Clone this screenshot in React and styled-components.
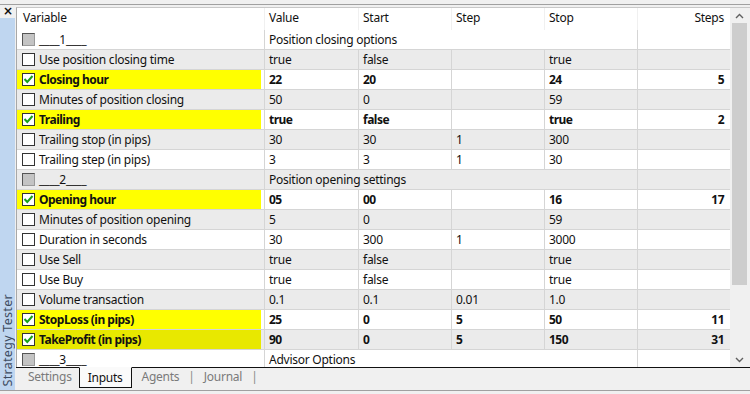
import React from "react";
import styled, { createGlobalStyle } from "styled-components";

const GlobalStyle = createGlobalStyle`
  html, body {
    margin: 0;
    padding: 0;
    background: #f0f0f0;
  }
  body {
    font-family: "Noto Sans", "Open Sans", sans-serif;
    font-size: 12px;
    letter-spacing: -0.25px;
    color: #111;
  }
`;

const rows = [
  { group: true, name: "____1____", desc: "Position closing options" },
  { name: "Use position closing time", value: "true", start: "false", step: "", stop: "true", steps: "" },
  { name: "Closing hour", checked: true, value: "22", start: "20", step: "", stop: "24", steps: "5" },
  { name: "Minutes of position closing", value: "50", start: "0", step: "", stop: "59", steps: "" },
  { name: "Trailing", checked: true, value: "true", start: "false", step: "", stop: "true", steps: "2" },
  { name: "Trailing stop (in pips)", value: "30", start: "30", step: "1", stop: "300", steps: "" },
  { name: "Trailing step (in pips)", value: "3", start: "3", step: "1", stop: "30", steps: "" },
  { group: true, name: "____2____", desc: "Position opening settings" },
  { name: "Opening hour", checked: true, value: "05", start: "00", step: "", stop: "16", steps: "17" },
  { name: "Minutes of position opening", value: "5", start: "0", step: "", stop: "59", steps: "" },
  { name: "Duration in seconds", value: "30", start: "300", step: "1", stop: "3000", steps: "" },
  { name: "Use Sell", value: "true", start: "false", step: "", stop: "true", steps: "" },
  { name: "Use Buy", value: "true", start: "false", step: "", stop: "true", steps: "" },
  { name: "Volume transaction", value: "0.1", start: "0.1", step: "0.01", stop: "1.0", steps: "" },
  { name: "StopLoss (in pips)", checked: true, value: "25", start: "0", step: "5", stop: "50", steps: "11" },
  { name: "TakeProfit (in pips)", checked: true, value: "90", start: "0", step: "5", stop: "150", steps: "31" },
  { group: true, name: "____3____", desc: "Advisor Options" },
];

const COLS = "247px 94px 93px 93px 93px 93px";

const Window = styled.div`
  width: 750px;
  height: 394px;
  box-sizing: border-box;
  padding-top: 4px;
  background: #f0f0f0;
  overflow: hidden;
  display: flex;
  flex-direction: column;
`;

const Frame = styled.div`
  flex: 1;
  border-top: 1px solid #a0a0a0;
  border-bottom: 1px solid #a0a0a0;
  display: flex;
  min-height: 0;
  margin-bottom: 3px;
`;

const Sidebar = styled.div`
  width: 15px;
  display: flex;
  flex-direction: column;
  margin-right: 1px;
`;

const Close = styled.div`
  height: 13px;
  font-family: "DejaVu Sans", sans-serif;
  font-weight: bold;
  font-size: 12px;
  line-height: 12px;
  padding-left: 3px;
  color: #111;
`;

const SideStrip = styled.div`
  flex: 1;
  background: #bfd6f0;
  display: flex;
  align-items: flex-end;
  justify-content: center;
  overflow: hidden;
`;

const SideLabel = styled.div`
  writing-mode: vertical-rl;
  transform: rotate(180deg);
  color: #3d4b60;
  font-size: 12.5px;
  letter-spacing: 0.3px;
  line-height: 15px;
  padding-top: 3px;
  white-space: nowrap;
`;

const Main = styled.div`
  flex: 1;
  display: flex;
  flex-direction: column;
  min-width: 0;
  padding-top: 2px;
`;

const GridArea = styled.div`
  height: 360px;
  display: flex;
  border-left: 1px solid #a8a8a8;
  border-top: 1px solid #c8c8c8;
  box-sizing: border-box;
  overflow: hidden;
`;

const Table = styled.div`
  width: 713px;
  background: #fff;
  overflow: hidden;
`;

const HeaderRow = styled.div`
  display: grid;
  grid-template-columns: ${COLS};
  height: 22px;
  background: #fff;
`;

const HeadCell = styled.div`
  padding: 0 ${(p) => (p.$right ? "6px" : "5px")};
  line-height: 20px;
  text-align: ${(p) => (p.$right ? "right" : "left")};
  border-left: ${(p) => (p.$first ? "none" : "1px solid #f0f0f0")};
  padding-left: ${(p) => (p.$first ? "6px" : "4px")};
`;

const Row = styled.div`
  display: grid;
  grid-template-columns: ${COLS};
  height: 20px;
  box-sizing: border-box;
  border-bottom: 1px solid #d5d5d5;
  background: ${(p) => (p.$alt ? "#ebebeb" : "#fff")};
  font-weight: ${(p) => (p.$bold ? "bold" : "normal")};
  letter-spacing: ${(p) => (p.$bold ? "-0.5px" : "-0.25px")};
`;

const NameCell = styled.div`
  display: flex;
  align-items: center;
  gap: 4px;
  padding-left: 5px;
  margin-right: 3px;
  white-space: nowrap;
  overflow: hidden;
  background: ${(p) => (p.$hl ? (p.$alt ? "#e8e800" : "#ffff00") : "transparent")};
`;

const Cell = styled.div`
  padding: 0 ${(p) => (p.$right ? "6px" : "4px")};
  line-height: 19px;
  text-align: ${(p) => (p.$right ? "right" : "left")};
  border-left: 1px solid #d5d5d5;
  white-space: nowrap;
  overflow: hidden;
`;

const DescCell = styled(Cell)`
  grid-column: span 4;
`;

const Box = styled.span`
  width: 13px;
  height: 13px;
  box-sizing: border-box;
  flex-shrink: 0;
  display: flex;
  align-items: center;
  justify-content: center;
  background: ${(p) => (p.$group ? "#c4c4c4" : "#fff")};
  border: 1px solid ${(p) => (p.$group ? "#9a9a9a" : "#333")};
  border-top-color: ${(p) => (p.$group ? "#555" : "#333")};
  border-left-color: ${(p) => (p.$group ? "#555" : "#333")};
`;

const Scrollbar = styled.div`
  width: 18px;
  background: #f0f0f0;
  display: flex;
  flex-direction: column;
  align-items: center;
`;

const Arrow = styled.div`
  height: 15px;
  width: 100%;
  display: flex;
  align-items: center;
  justify-content: center;
  flex-shrink: 0;
`;

const Track = styled.div`
  flex: 1;
  width: 15px;
  padding-bottom: 67px;
  display: flex;
`;

const Thumb = styled.div`
  flex: 1;
  background: #cdcdcd;
`;

const TabBar = styled.div`
  flex: 1;
  display: flex;
  align-items: flex-start;
  border-top: 1px solid #111;
  padding-left: 5px;
  color: #7a7a7a;
`;

const Tab = styled.div`
  height: 18px;
  line-height: 17px;
  padding: 0 ${(p) => (p.$active ? "8px" : "7px")};
  margin-top: -1px;
  color: ${(p) => (p.$active ? "#111" : "#7a7a7a")};
  background: ${(p) => (p.$active ? "#fafafa" : "transparent")};
  border: ${(p) => (p.$active ? "1px solid #111" : "none")};
  border-top: ${(p) => (p.$active ? "1px solid #fafafa" : "none")};
  margin-right: ${(p) => (p.$active ? "3px" : "0")};
  padding-top: 1px;
`;

const Sep = styled.span`
  line-height: 18px;
  color: #8a8a8a;
  padding: 0 2px;
`;

const Check = () => (
  <svg width="11" height="11" viewBox="0 0 11 11">
    <path d="M1.5 5 L4.3 8 L9.5 2" fill="none" stroke="#19a019" strokeWidth="2" />
  </svg>
);

const Chevron = ({ down }) => (
  <svg width="9" height="6" viewBox="0 0 9 6">
    <path
      d={down ? "M1 1 L4.5 4.5 L8 1" : "M1 5 L4.5 1.5 L8 5"}
      fill="none"
      stroke="#606060"
      strokeWidth="1.4"
    />
  </svg>
);

export default function App() {
  return (
    <>
      <GlobalStyle />
      <Window>
        <Frame>
          <Sidebar>
            <Close>×</Close>
            <SideStrip>
              <SideLabel>Strategy Tester</SideLabel>
            </SideStrip>
          </Sidebar>
          <Main>
            <GridArea>
              <Table>
                <HeaderRow>
                  <HeadCell $first>Variable</HeadCell>
                  <HeadCell>Value</HeadCell>
                  <HeadCell>Start</HeadCell>
                  <HeadCell>Step</HeadCell>
                  <HeadCell>Stop</HeadCell>
                  <HeadCell $right>Steps</HeadCell>
                </HeaderRow>
                {rows.map((r, i) => {
                  const alt = i % 2 === 1;
                  if (r.group) {
                    return (
                      <Row key={i} $alt={alt}>
                        <NameCell>
                          <Box $group />
                          <span>{r.name}</span>
                        </NameCell>
                        <DescCell>{r.desc}</DescCell>
                        <Cell $right />
                      </Row>
                    );
                  }
                  return (
                    <Row key={i} $alt={alt} $bold={r.checked}>
                      <NameCell $hl={r.checked} $alt={alt}>
                        <Box>{r.checked && <Check />}</Box>
                        <span>{r.name}</span>
                      </NameCell>
                      <Cell>{r.value}</Cell>
                      <Cell>{r.start}</Cell>
                      <Cell>{r.step}</Cell>
                      <Cell>{r.stop}</Cell>
                      <Cell $right>{r.steps}</Cell>
                    </Row>
                  );
                })}
              </Table>
              <Scrollbar>
                <Arrow>
                  <Chevron />
                </Arrow>
                <Track>
                  <Thumb />
                </Track>
                <Arrow>
                  <Chevron down />
                </Arrow>
              </Scrollbar>
            </GridArea>
            <TabBar>
              <Tab>Settings</Tab>
              <Tab $active>Inputs</Tab>
              <Tab>Agents</Tab>
              <Sep>|</Sep>
              <Tab>Journal</Tab>
              <Sep>|</Sep>
            </TabBar>
          </Main>
        </Frame>
      </Window>
    </>
  );
}
